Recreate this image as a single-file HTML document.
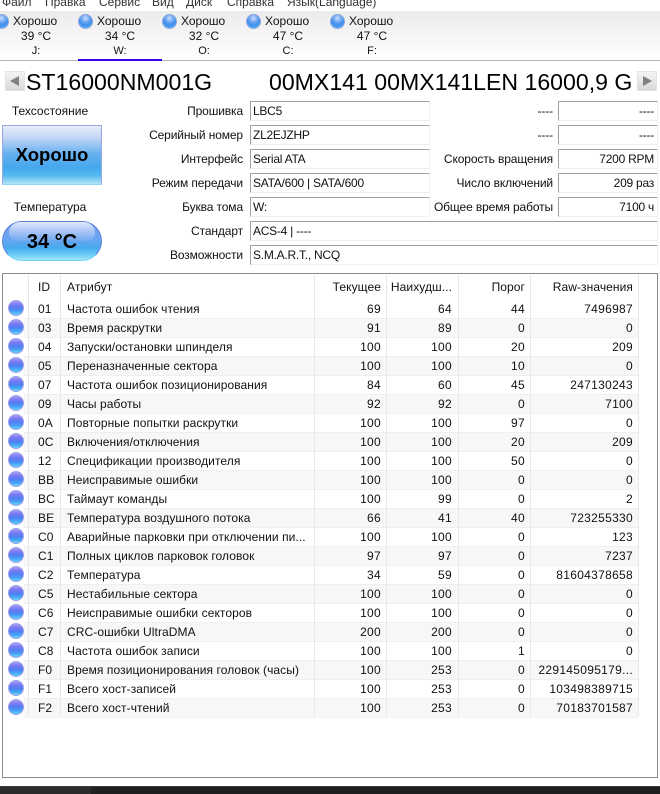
<!DOCTYPE html>
<html><head><meta charset="utf-8"><style>
*{box-sizing:border-box;margin:0;padding:0}
html,body{width:660px;height:794px;overflow:hidden;background:#fff}
body{position:relative;font:12px "Liberation Sans","DejaVu Sans",sans-serif;color:#111}
.a{position:absolute;white-space:nowrap}
.menu{top:-6px;height:16px;line-height:16px;color:#333;font-size:12px}
.tabs{left:0;top:11px;width:660px;height:50px;background:linear-gradient(#ebebeb,#fff);border-bottom:1px solid #b4b4b4}
.ball{position:absolute;width:15px;height:15px;border-radius:50%;background:radial-gradient(circle at 50% 25%,#cfe0ff 0,#6aa4f0 35%,#3f8fee 60%,#62c6f6 100%);border:1px solid #8fa6dc}
.t{position:absolute;text-align:center;width:84px;line-height:16px}
.h{position:absolute;line-height:16px;top:13px;white-space:nowrap}
.lbl{position:absolute;text-align:right;line-height:18px;height:18px;white-space:nowrap;letter-spacing:-.12px}
.box{position:absolute;height:20px;line-height:18px;border:1px solid #f0f0f0;border-left:1px solid #a0a0a0;border-top:1px solid #a0a0a0;padding:0 3px 0 2px;white-space:nowrap;overflow:hidden;letter-spacing:-.25px}
.r{text-align:right}
.tbl{left:2px;top:273px;width:656px;height:505px;border:1px solid #8a8a8a}
.row{position:absolute;left:24px;width:614px;height:19px;border-bottom:1px solid #efefef}
.row.alt{background:#f7f7f7}
.c{position:absolute;line-height:19px;height:19px;top:0;white-space:nowrap;letter-spacing:.08px}
.c:not(.r)[style*="right"]{letter-spacing:.3px}
.sep{position:absolute;top:275px;height:441px;width:1px;background:#e8e8e8}
.b2{position:absolute;left:8px;width:16px;height:16px;margin-top:-1px;border-radius:50%;background:linear-gradient(#a9a2f6 0,#7a78f2 25%,#4f80f2 55%,#45a8f6 78%,#6ad4fb 100%);border:1px solid #a0a0e6}
.arrow{position:absolute;top:71px;width:20px;height:20px;background:linear-gradient(#f4f4f4,#d8d8d8);border:1px solid #e2e2e2}
</style></head><body>
<div class="a menu" style="left:2px">Файл</div>
<div class="a menu" style="left:45px">Правка</div>
<div class="a menu" style="left:99px">Сервис</div>
<div class="a menu" style="left:152px">Вид</div>
<div class="a menu" style="left:186px">Диск</div>
<div class="a menu" style="left:227px">Справка</div>
<div class="a menu" style="left:287px">Язык(Language)</div>

<div class="a tabs"></div>
<div class="ball" style="left:-6px;top:14px"></div>
<div class="ball" style="left:78px;top:14px"></div>
<div class="ball" style="left:162px;top:14px"></div>
<div class="ball" style="left:246px;top:14px"></div>
<div class="ball" style="left:330px;top:14px"></div>
<div class="h" style="left:13px">Хорошо</div>
<div class="h" style="left:97px">Хорошо</div>
<div class="h" style="left:181px">Хорошо</div>
<div class="h" style="left:265px">Хорошо</div>
<div class="h" style="left:349px">Хорошо</div>
<div class="t" style="left:-6px;top:28px">39 °C</div>
<div class="t" style="left:78px;top:28px">34 °C</div>
<div class="t" style="left:162px;top:28px">32 °C</div>
<div class="t" style="left:246px;top:28px">47 °C</div>
<div class="t" style="left:330px;top:28px">47 °C</div>
<div class="t" style="left:-6px;top:43px;font-size:11px">J:</div>
<div class="t" style="left:78px;top:43px;font-size:11px">W:</div>
<div class="t" style="left:162px;top:43px;font-size:11px">O:</div>
<div class="t" style="left:246px;top:43px;font-size:11px">C:</div>
<div class="t" style="left:330px;top:43px;font-size:11px">F:</div>
<div class="a" style="left:78px;top:59px;width:84px;height:2px;background:#3b00f0"></div>

<div class="arrow" style="left:5px"><svg width="18" height="18"><path d="M13 4v10L4 9z" fill="#808080"/></svg></div>
<div class="a" style="left:26px;top:69px;font-size:23.1px;line-height:26px;color:#000">ST16000NM001G</div>
<div class="a" style="left:269px;top:69px;font-size:23.1px;line-height:26px;color:#000">00MX141 00MX141LEN 16000,9 G</div>
<div class="arrow" style="left:637px"><svg width="18" height="18"><path d="M5 4v10l9-5z" fill="#808080"/></svg></div>

<div class="a" style="left:3px;top:103px;width:94px;text-align:center;line-height:16px">Техсостояние</div>
<div class="a" style="left:2px;top:125px;width:100px;height:60px;border:1px solid #9aa6dc;border-bottom-color:#8fd8f4;background:linear-gradient(#e8ecfb 0,#c4d6f6 20%,#66b0ef 48%,#45a8ee 72%,#58baf0 86%,#b4e6f9 100%);text-align:center;font:bold 18.5px/58px 'Liberation Sans',sans-serif;color:#000">Хорошо</div>
<div class="a" style="left:3px;top:199px;width:94px;text-align:center;line-height:16px">Температура</div>
<div class="a" style="left:2px;top:221px;width:100px;height:40px;border-radius:20px;border:1px solid #5f7fd8;border-bottom-color:#70d0f0;background:linear-gradient(#6f9df0 0,#6aa4f0 45%,#46aaee 68%,#70cff5 88%,#a8e6fa 100%)"></div>
<div class="a" style="left:9px;top:222px;width:86px;height:20px;border-radius:14px 14px 12px 12px;background:linear-gradient(rgba(232,236,252,.95),rgba(205,220,250,.7) 40%,rgba(120,175,240,.05))"></div>
<div class="a" style="left:2px;top:221px;width:100px;height:40px;text-align:center;font:bold 20px/42px 'Liberation Sans',sans-serif;color:#000">34 °C</div>

<div class="lbl" style="right:417px;top:102px">Прошивка</div>
<div class="lbl" style="right:417px;top:126px">Серийный номер</div>
<div class="lbl" style="right:417px;top:150px">Интерфейс</div>
<div class="lbl" style="right:417px;top:174px">Режим передачи</div>
<div class="lbl" style="right:417px;top:198px">Буква тома</div>
<div class="lbl" style="right:417px;top:222px">Стандарт</div>
<div class="lbl" style="right:417px;top:246px">Возможности</div>
<div class="box" style="left:250px;top:101px;width:180px">LBC5</div>
<div class="box" style="left:250px;top:125px;width:180px">ZL2EJZHP</div>
<div class="box" style="left:250px;top:149px;width:180px">Serial ATA</div>
<div class="box" style="left:250px;top:173px;width:180px">SATA/600 | SATA/600</div>
<div class="box" style="left:250px;top:197px;width:180px">W:</div>
<div class="box" style="left:250px;top:221px;width:408px">ACS-4 | ----</div>
<div class="box" style="left:250px;top:245px;width:408px">S.M.A.R.T., NCQ</div>

<div class="lbl" style="right:107px;top:102px">----</div>
<div class="lbl" style="right:107px;top:126px">----</div>
<div class="lbl" style="right:107px;top:150px">Скорость вращения</div>
<div class="lbl" style="right:107px;top:174px">Число включений</div>
<div class="lbl" style="right:107px;top:198px">Общее время работы</div>
<div class="box r" style="left:558px;top:101px;width:100px">----</div>
<div class="box r" style="left:558px;top:125px;width:100px">----</div>
<div class="box r" style="left:558px;top:149px;width:100px">7200 RPM</div>
<div class="box r" style="left:558px;top:173px;width:100px">209 раз</div>
<div class="box r" style="left:558px;top:197px;width:100px">7100 ч</div>

<div class="a tbl"></div>
<div class="c" style="left:38px;top:278px">ID</div>
<div class="c" style="left:67px;top:278px">Атрибут</div>
<div class="c r" style="right:279px;top:278px">Текущее</div>
<div class="c r" style="right:208px;top:278px">Наихудш...</div>
<div class="c r" style="right:135px;top:278px">Порог</div>
<div class="c r" style="right:27px;top:278px">Raw-значения</div>

<div class="row" style="top:300px"></div><div class="b2" style="top:301px"></div>
<div class="row alt" style="top:319px"></div><div class="b2" style="top:320px"></div>
<div class="row" style="top:338px"></div><div class="b2" style="top:339px"></div>
<div class="row alt" style="top:357px"></div><div class="b2" style="top:358px"></div>
<div class="row" style="top:376px"></div><div class="b2" style="top:377px"></div>
<div class="row alt" style="top:395px"></div><div class="b2" style="top:396px"></div>
<div class="row" style="top:414px"></div><div class="b2" style="top:415px"></div>
<div class="row alt" style="top:433px"></div><div class="b2" style="top:434px"></div>
<div class="row" style="top:452px"></div><div class="b2" style="top:453px"></div>
<div class="row alt" style="top:471px"></div><div class="b2" style="top:472px"></div>
<div class="row" style="top:490px"></div><div class="b2" style="top:491px"></div>
<div class="row alt" style="top:509px"></div><div class="b2" style="top:510px"></div>
<div class="row" style="top:528px"></div><div class="b2" style="top:529px"></div>
<div class="row alt" style="top:547px"></div><div class="b2" style="top:548px"></div>
<div class="row" style="top:566px"></div><div class="b2" style="top:567px"></div>
<div class="row alt" style="top:585px"></div><div class="b2" style="top:586px"></div>
<div class="row" style="top:604px"></div><div class="b2" style="top:605px"></div>
<div class="row alt" style="top:623px"></div><div class="b2" style="top:624px"></div>
<div class="row" style="top:642px"></div><div class="b2" style="top:643px"></div>
<div class="row alt" style="top:661px"></div><div class="b2" style="top:662px"></div>
<div class="row" style="top:680px"></div><div class="b2" style="top:681px"></div>
<div class="row alt" style="top:699px"></div><div class="b2" style="top:700px"></div>

<div class="sep" style="left:28px"></div><div class="sep" style="left:60px"></div><div class="sep" style="left:314px"></div><div class="sep" style="left:386px"></div><div class="sep" style="left:458px"></div><div class="sep" style="left:530px"></div><div class="sep" style="left:638px"></div>

<div class="c" style="left:38px;top:300px">01</div><div class="c" style="left:67px;top:300px">Частота ошибок чтения</div><div class="c" style="right:279px;top:300px">69</div><div class="c" style="right:208px;top:300px">64</div><div class="c" style="right:135px;top:300px">44</div><div class="c" style="right:27px;top:300px">7496987</div>
<div class="c" style="left:38px;top:319px">03</div><div class="c" style="left:67px;top:319px">Время раскрутки</div><div class="c" style="right:279px;top:319px">91</div><div class="c" style="right:208px;top:319px">89</div><div class="c" style="right:135px;top:319px">0</div><div class="c" style="right:27px;top:319px">0</div>
<div class="c" style="left:38px;top:338px">04</div><div class="c" style="left:67px;top:338px">Запуски/остановки шпинделя</div><div class="c" style="right:279px;top:338px">100</div><div class="c" style="right:208px;top:338px">100</div><div class="c" style="right:135px;top:338px">20</div><div class="c" style="right:27px;top:338px">209</div>
<div class="c" style="left:38px;top:357px">05</div><div class="c" style="left:67px;top:357px">Переназначенные сектора</div><div class="c" style="right:279px;top:357px">100</div><div class="c" style="right:208px;top:357px">100</div><div class="c" style="right:135px;top:357px">10</div><div class="c" style="right:27px;top:357px">0</div>
<div class="c" style="left:38px;top:376px">07</div><div class="c" style="left:67px;top:376px">Частота ошибок позиционирования</div><div class="c" style="right:279px;top:376px">84</div><div class="c" style="right:208px;top:376px">60</div><div class="c" style="right:135px;top:376px">45</div><div class="c" style="right:27px;top:376px">247130243</div>
<div class="c" style="left:38px;top:395px">09</div><div class="c" style="left:67px;top:395px">Часы работы</div><div class="c" style="right:279px;top:395px">92</div><div class="c" style="right:208px;top:395px">92</div><div class="c" style="right:135px;top:395px">0</div><div class="c" style="right:27px;top:395px">7100</div>
<div class="c" style="left:38px;top:414px">0A</div><div class="c" style="left:67px;top:414px">Повторные попытки раскрутки</div><div class="c" style="right:279px;top:414px">100</div><div class="c" style="right:208px;top:414px">100</div><div class="c" style="right:135px;top:414px">97</div><div class="c" style="right:27px;top:414px">0</div>
<div class="c" style="left:38px;top:433px">0C</div><div class="c" style="left:67px;top:433px">Включения/отключения</div><div class="c" style="right:279px;top:433px">100</div><div class="c" style="right:208px;top:433px">100</div><div class="c" style="right:135px;top:433px">20</div><div class="c" style="right:27px;top:433px">209</div>
<div class="c" style="left:38px;top:452px">12</div><div class="c" style="left:67px;top:452px">Спецификации производителя</div><div class="c" style="right:279px;top:452px">100</div><div class="c" style="right:208px;top:452px">100</div><div class="c" style="right:135px;top:452px">50</div><div class="c" style="right:27px;top:452px">0</div>
<div class="c" style="left:38px;top:471px">BB</div><div class="c" style="left:67px;top:471px">Неисправимые ошибки</div><div class="c" style="right:279px;top:471px">100</div><div class="c" style="right:208px;top:471px">100</div><div class="c" style="right:135px;top:471px">0</div><div class="c" style="right:27px;top:471px">0</div>
<div class="c" style="left:38px;top:490px">BC</div><div class="c" style="left:67px;top:490px">Таймаут команды</div><div class="c" style="right:279px;top:490px">100</div><div class="c" style="right:208px;top:490px">99</div><div class="c" style="right:135px;top:490px">0</div><div class="c" style="right:27px;top:490px">2</div>
<div class="c" style="left:38px;top:509px">BE</div><div class="c" style="left:67px;top:509px">Температура воздушного потока</div><div class="c" style="right:279px;top:509px">66</div><div class="c" style="right:208px;top:509px">41</div><div class="c" style="right:135px;top:509px">40</div><div class="c" style="right:27px;top:509px">723255330</div>
<div class="c" style="left:38px;top:528px">C0</div><div class="c" style="left:67px;top:528px">Аварийные парковки при отключении пи...</div><div class="c" style="right:279px;top:528px">100</div><div class="c" style="right:208px;top:528px">100</div><div class="c" style="right:135px;top:528px">0</div><div class="c" style="right:27px;top:528px">123</div>
<div class="c" style="left:38px;top:547px">C1</div><div class="c" style="left:67px;top:547px">Полных циклов парковок головок</div><div class="c" style="right:279px;top:547px">97</div><div class="c" style="right:208px;top:547px">97</div><div class="c" style="right:135px;top:547px">0</div><div class="c" style="right:27px;top:547px">7237</div>
<div class="c" style="left:38px;top:566px">C2</div><div class="c" style="left:67px;top:566px">Температура</div><div class="c" style="right:279px;top:566px">34</div><div class="c" style="right:208px;top:566px">59</div><div class="c" style="right:135px;top:566px">0</div><div class="c" style="right:27px;top:566px">81604378658</div>
<div class="c" style="left:38px;top:585px">C5</div><div class="c" style="left:67px;top:585px">Нестабильные сектора</div><div class="c" style="right:279px;top:585px">100</div><div class="c" style="right:208px;top:585px">100</div><div class="c" style="right:135px;top:585px">0</div><div class="c" style="right:27px;top:585px">0</div>
<div class="c" style="left:38px;top:604px">C6</div><div class="c" style="left:67px;top:604px">Неисправимые ошибки секторов</div><div class="c" style="right:279px;top:604px">100</div><div class="c" style="right:208px;top:604px">100</div><div class="c" style="right:135px;top:604px">0</div><div class="c" style="right:27px;top:604px">0</div>
<div class="c" style="left:38px;top:623px">C7</div><div class="c" style="left:67px;top:623px">CRC-ошибки UltraDMA</div><div class="c" style="right:279px;top:623px">200</div><div class="c" style="right:208px;top:623px">200</div><div class="c" style="right:135px;top:623px">0</div><div class="c" style="right:27px;top:623px">0</div>
<div class="c" style="left:38px;top:642px">C8</div><div class="c" style="left:67px;top:642px">Частота ошибок записи</div><div class="c" style="right:279px;top:642px">100</div><div class="c" style="right:208px;top:642px">100</div><div class="c" style="right:135px;top:642px">1</div><div class="c" style="right:27px;top:642px">0</div>
<div class="c" style="left:38px;top:661px">F0</div><div class="c" style="left:67px;top:661px">Время позиционирования головок (часы)</div><div class="c" style="right:279px;top:661px">100</div><div class="c" style="right:208px;top:661px">253</div><div class="c" style="right:135px;top:661px">0</div><div class="c" style="right:27px;top:661px">229145095179...</div>
<div class="c" style="left:38px;top:680px">F1</div><div class="c" style="left:67px;top:680px">Всего хост-записей</div><div class="c" style="right:279px;top:680px">100</div><div class="c" style="right:208px;top:680px">253</div><div class="c" style="right:135px;top:680px">0</div><div class="c" style="right:27px;top:680px">103498389715</div>
<div class="c" style="left:38px;top:699px">F2</div><div class="c" style="left:67px;top:699px">Всего хост-чтений</div><div class="c" style="right:279px;top:699px">100</div><div class="c" style="right:208px;top:699px">253</div><div class="c" style="right:135px;top:699px">0</div><div class="c" style="right:27px;top:699px">70183701587</div>

<div class="a" style="left:0;top:786px;width:660px;height:8px;background:#1f1f1f;border-top:1px solid #3a3a3a"></div>
<div class="a" style="left:0;top:786px;width:91px;height:8px;background:#2b2b2b;border-top:1px solid #3a3a3a"></div>
</body></html>
